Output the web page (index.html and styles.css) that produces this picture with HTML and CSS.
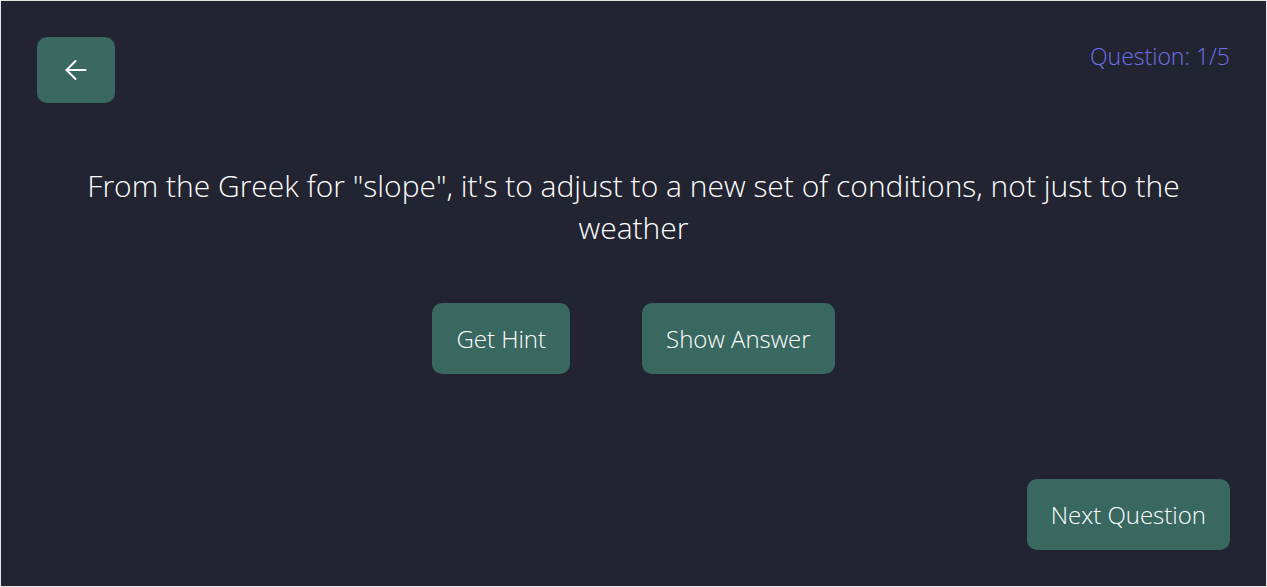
FILE: index.html
```html
<!DOCTYPE html>
<html>
<head>
<meta charset="utf-8">
<link rel="stylesheet" href="styles.css">
</head>
<body>
<div class="page">
  <div class="top">
    <button class="btn back" aria-label="Back">
      <svg width="22" height="22" viewBox="0 0 22 22" fill="none" stroke="#fff" stroke-width="2" stroke-linecap="round" stroke-linejoin="round"><path d="M20.5 11H1.5"/><path d="M10.5 20L1.5 11l9-9"/></svg>
    </button>
    <div class="counter">Question: 1/5</div>
  </div>
  <h1 class="question">From the Greek for "slope", it's to adjust to a new set of conditions, not just to the weather</h1>
  <div class="actions">
    <button class="btn">Get Hint</button>
    <button class="btn">Show Answer</button>
  </div>
  <div class="bottom">
    <button class="btn">Next Question</button>
  </div>
</div>
</body>
</html>
```
FILE: styles.css
```css
* { box-sizing: border-box; }
html, body { margin: 0; padding: 0; }
body {
  background: #222431;
  font-family: "Open Sans", "Lato", sans-serif;
  color: #ffffff;
}
.page {
  height: 587px;
  border: 1px solid #e6e6e6;
  padding: 36px 36px 36px 36px;
  display: flex;
  flex-direction: column;
}
.top {
  display: flex;
  justify-content: space-between;
  align-items: flex-start;
}
.btn {
  background: #386860;
  color: #ffffff;
  border: none;
  border-radius: 10px;
  font-family: inherit;
  font-size: 24px;
  font-weight: 300;
  height: 71px;
  padding: 0 24px;
  display: flex;
  align-items: center;
  justify-content: center;
}
.back {
  width: 78px;
  height: 66px;
  padding: 0;
}
.counter {
  color: #6e71ea;
  font-size: 23px;
  font-weight: 300;
  line-height: 1;
  padding-top: 8px;
}
.question {
  margin: 62px 0 0 0;
  text-align: center;
  font-size: 30px;
  font-weight: 300;
  line-height: 42px;
}
.actions {
  margin-top: 54px;
  display: flex;
  justify-content: center;
  gap: 72px;
}
.bottom {
  margin-top: auto;
  display: flex;
  justify-content: flex-end;
}
```
